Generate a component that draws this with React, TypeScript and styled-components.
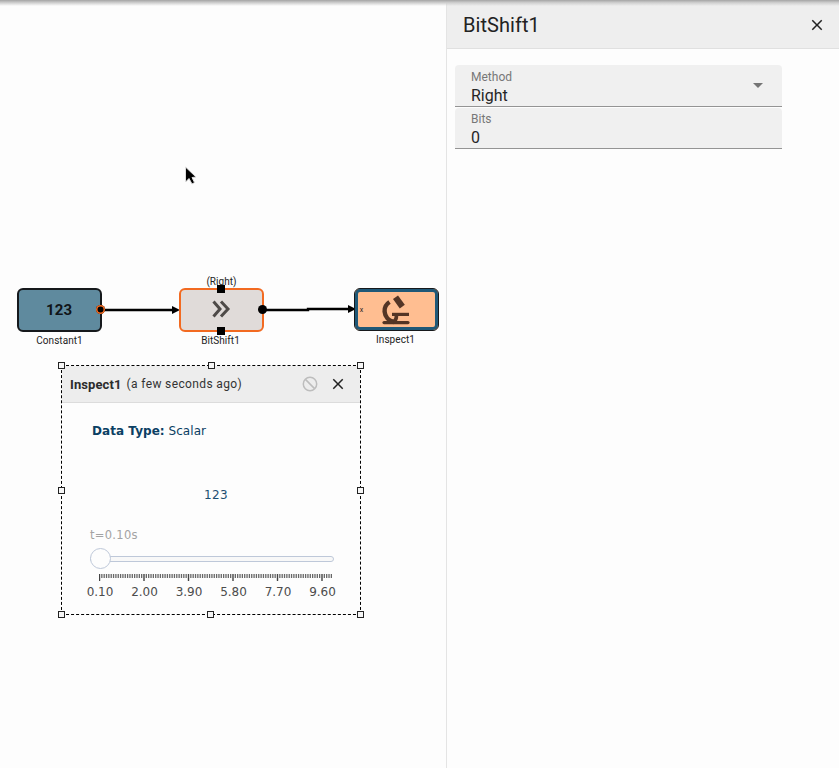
import React from "react";
import styled, { createGlobalStyle } from "styled-components";

const Global = createGlobalStyle`
  html, body { margin: 0; padding: 0; background: #fdfdfd; }
  body { font-family: Roboto, "Liberation Sans", sans-serif; overflow: hidden; }
  #root { width: 839px; height: 768px; }
`;

const Page = styled.div`
  position: relative;
  display: flex;
  width: 839px;
  height: 768px;
  overflow: hidden;
  background: #fdfdfd;
`;

const TopShade = styled.div`
  position: absolute;
  left: 0;
  top: 0;
  right: 0;
  height: 6px;
  z-index: 5;
  background: linear-gradient(to bottom, #a4a4a4 0%, #cfcfcf 45%, #eeeeee00 100%);
`;

const Canvas = styled.main`
  position: relative;
  flex: 0 0 446px;
  height: 768px;
`;

const Wires = styled.svg`
  position: absolute;
  left: 0;
  top: 0;
  width: 446px;
  height: 400px;
`;

const Block = styled.div<{ $x: number; $y: number; $h: number; $bg: string; $border: string; $ring?: string }>`
  position: absolute;
  left: ${(p) => p.$x}px;
  top: ${(p) => p.$y}px;
  width: 85px;
  height: ${(p) => p.$h}px;
  box-sizing: border-box;
  display: flex;
  align-items: center;
  justify-content: center;
  background: ${(p) => p.$bg};
  border: ${(p) => (p.$ring ? "1px" : "2px")} solid ${(p) => p.$border};
  border-radius: 6px;
  box-shadow: ${(p) => (p.$ring ? `inset 0 0 0 3px ${p.$ring}` : "none")};
`;

const BlockValue = styled.span`
  font-size: 15px;
  font-weight: 700;
  letter-spacing: 0.15px;
  color: #101418;
`;

const BlockLabel = styled.span<{ $x: number; $y: number }>`
  position: absolute;
  left: ${(p) => p.$x}px;
  top: ${(p) => p.$y}px;
  width: 85px;
  text-align: center;
  font-size: 10px;
  line-height: 12px;
  letter-spacing: 0.05px;
  color: #222;
`;

const Port = styled.span<{ $x: number; $y: number; $ring?: boolean }>`
  position: absolute;
  left: ${(p) => p.$x}px;
  top: ${(p) => p.$y}px;
  width: 9px;
  height: 9px;
  border-radius: 50%;
  background: #000;
  box-shadow: ${(p) => (p.$ring ? "inset 0 0 0 1.5px #f26a21" : "none")};
`;

const SquarePort = styled.span<{ $x: number; $y: number }>`
  position: absolute;
  left: ${(p) => p.$x}px;
  top: ${(p) => p.$y}px;
  width: 8px;
  height: 8px;
  background: #000;
`;

const SmallX = styled.span`
  position: absolute;
  left: 5px;
  top: 17px;
  font-size: 7px;
  line-height: 8px;
  color: #222;
`;

const Cursor = styled.svg`
  position: absolute;
  left: 183px;
  top: 165px;
  width: 16px;
  height: 22px;
`;

const InspectWindow = styled.section`
  position: absolute;
  left: 61px;
  top: 365px;
  width: 300px;
  height: 250px;
  box-sizing: border-box;
  border: 1px dashed #000;
  display: flex;
  flex-direction: column;
`;

const Handle = styled.span<{ $x: number; $y: number }>`
  position: absolute;
  left: ${(p) => p.$x}px;
  top: ${(p) => p.$y}px;
  width: 7px;
  height: 7px;
  box-sizing: border-box;
  background: #f6f6f6;
  border: 1px solid #222;
  z-index: 2;
`;

const InspectHeader = styled.header`
  flex: 0 0 37px;
  box-sizing: border-box;
  display: flex;
  align-items: center;
  padding: 0 13px 0 8px;
  background: #ededed;
  border-bottom: 1px solid #dcdcdc;
  font-size: 12px;
  color: #333;
  letter-spacing: 0.37px;
`;

const InspectTitle = styled.strong`
  font-size: 13px;
  font-weight: 700;
  margin-right: 5px;
  color: #2c2c2c;
  letter-spacing: 0.1px;
`;

const InspectAgo = styled.span`
  flex: 1;
`;

const HeaderIcons = styled.div`
  display: flex;
  align-items: center;
  gap: 11px;
`;

const InspectBody = styled.div`
  flex: 1;
  display: flex;
  flex-direction: column;
  font-family: "DejaVu Sans", Verdana, sans-serif;
  color: #0b3f63;
`;

const DataType = styled.p`
  margin: 20px 0 0 30px;
  font-size: 12px;
  line-height: 16px;
  letter-spacing: 0.05px;
  strong { font-weight: 700; }
`;

const ScalarValue = styled.p`
  margin: 49px 0 0 0;
  padding-left: 10px;
  text-align: center;
  font-size: 12px;
  line-height: 15px;
  letter-spacing: 0.3px;
  color: #1d4f72;
`;

const TimeLabel = styled.div`
  margin: 25px 0 0 28px;
  font-size: 11.5px;
  line-height: 14px;
  color: #a3a3a3;
  letter-spacing: 0.3px;
`;

const SliderRow = styled.div`
  position: relative;
  margin: 6px 0 0 27.5px;
  width: 244.5px;
  height: 21px;
  display: flex;
  align-items: center;
`;

const SliderTrack = styled.div`
  flex: 1;
  height: 6px;
  box-sizing: border-box;
  border: 1px solid #bec8d9;
  border-radius: 3px;
  background: #f8f8f8;
`;

const SliderThumb = styled.span`
  position: absolute;
  left: 0;
  top: 0;
  width: 21px;
  height: 21px;
  box-sizing: border-box;
  border-radius: 50%;
  border: 1px solid #bec8d9;
  background: #fdfdfd;
`;

const Ticks = styled.svg`
  display: block;
  margin: 5px 0 0 37px;
  width: 236px;
  height: 7px;
`;

const TickLabels = styled.div`
  position: relative;
  margin-top: 4px;
  height: 15px;
`;

const TickLabel = styled.span<{ $x: number }>`
  position: absolute;
  left: ${(p) => p.$x}px;
  top: 0;
  transform: translateX(-50%);
  font-size: 12px;
  line-height: 15px;
  color: #4c4c4c;
`;

const Panel = styled.aside`
  flex: 1;
  height: 768px;
  box-sizing: border-box;
  border-left: 1px solid #e4e4e4;
  display: flex;
  flex-direction: column;
`;

const PanelHeader = styled.header`
  flex: 0 0 49px;
  box-sizing: border-box;
  display: flex;
  align-items: center;
  justify-content: space-between;
  padding: 2px 13px 0 16px;
  background: #eeeeee;
  border-bottom: 1px solid #e0e0e0;
`;

const PanelTitle = styled.h1`
  margin: 0;
  font-size: 20px;
  font-weight: 400;
  letter-spacing: 0.05px;
  color: #222;
`;

const Fields = styled.div`
  display: flex;
  flex-direction: column;
  gap: 1px;
  width: 327px;
  margin: 16px 0 0 8px;
`;

const Field = styled.div<{ $h: number; $top: number }>`
  position: relative;
  height: ${(p) => p.$h}px;
  box-sizing: border-box;
  padding: ${(p) => p.$top}px 16px 0;
  background: #f0f0f0;
  border-radius: 4px 4px 0 0;
  border-bottom: 1px solid #949494;
`;

const FieldLabel = styled.div`
  font-size: 12px;
  line-height: 12px;
  color: #777;
`;

const FieldValue = styled.div`
  margin-top: 3px;
  font-size: 16px;
  line-height: 20px;
  color: #262626;
`;

const Caret = styled.span`
  position: absolute;
  right: 19px;
  top: 18px;
  width: 0;
  height: 0;
  border-left: 5px solid transparent;
  border-right: 5px solid transparent;
  border-top: 5px solid #757575;
`;

const closePath = "M19 6.41 17.59 5 12 10.59 6.41 5 5 6.41 10.59 12 5 17.59 6.41 19 12 13.41 17.59 19 19 17.59 13.41 12z";

const handles: [number, number][] = [
  [58, 362], [208, 362], [357, 362],
  [58, 487], [357, 487],
  [58, 611], [207, 611], [357, 611],
];
const tickValues: [string, number][] = [
  ["0.10", 38], ["2.00", 82.5], ["3.90", 127], ["5.80", 171.5], ["7.70", 216], ["9.60", 260.5],
];

export default function App() {
  const ticks = Array.from({ length: 100 }, (_, i) => i);
  return (
    <Page>
      <Global />
      <TopShade />
      <Canvas>
        <Wires viewBox="0 0 446 400">
          <path d="M104 310 H175" stroke="#000" strokeWidth="2.4" fill="none" />
          <path d="M172 306 L180 310 L172 314 Z" fill="#000" />
          <path d="M266 310 H308 V309 H351" stroke="#000" strokeWidth="2.4" fill="none" />
          <path d="M348 305 L356 309 L348 313 Z" fill="#000" />
        </Wires>

        <Block $x={16.7} $y={288} $h={44} $bg="#5f8a9e" $border="#16191c">
          <BlockValue>123</BlockValue>
        </Block>
        <BlockLabel $x={17} $y={335}>Constant1</BlockLabel>
        <Port $x={96} $y={305} $ring />

        <BlockLabel $x={179} $y={276}>(Right)</BlockLabel>
        <Block $x={178.7} $y={288} $h={44} $bg="#e0dbd9" $border="#f26a21">
          <svg width="20" height="20" viewBox="0 0 20 20" fill="none" stroke="#4e4a48" strokeWidth="3">
            <polyline points="2.5,1.5 9,9 2.5,16.5" />
            <polyline points="10,1.5 17,9 10,16.5" />
          </svg>
        </Block>
        <BlockLabel $x={178} $y={335}>BitShift1</BlockLabel>
        <SquarePort $x={217} $y={285} />
        <SquarePort $x={217} $y={327} />
        <Port $x={258} $y={305} />

        <Block $x={353.7} $y={288} $h={43} $bg="#ffbe91" $border="#16191c" $ring="#1f5877">
          <SmallX>x</SmallX>
          <svg width="30" height="30" viewBox="0 0 30 30" fill="none" stroke="#543525">
            <path d="M3 27.6 H27" strokeWidth="3.2" strokeLinecap="round" />
            <path d="M8.5 7 C4.5 9.5 3.4 13 3.6 16.5 C4 22 8 26 13 27" strokeWidth="4.4" />
            <path d="M11 19.4 H28" strokeWidth="3.2" />
            <path d="M15.5 20 C15.5 23 14.8 25.5 13 27" strokeWidth="3.6" />
            <path d="M14.5 2.2 L21.3 11.6" strokeWidth="6.2" />
          </svg>
        </Block>
        <BlockLabel $x={353} $y={334}>Inspect1</BlockLabel>

        <Cursor viewBox="0 0 16 22">
          <path d="M2.5 2 L2.5 17 L6 13.5 L9 19 L11.5 17.5 L9 12.5 L13 12 Z" fill="#000" stroke="#ddd" strokeWidth="1" />
        </Cursor>

        <InspectWindow>
          <InspectHeader>
            <InspectTitle>Inspect1</InspectTitle>
            <InspectAgo>(a few seconds ago)</InspectAgo>
            <HeaderIcons>
              <svg width="16" height="16" viewBox="0 0 16 16" fill="none" stroke="#bdbdbd" strokeWidth="1.5">
                <circle cx="8" cy="8" r="6.7" />
                <path d="M3.4 3.4 L12.6 12.6" />
              </svg>
              <svg width="18" height="18" viewBox="0 0 24 24" fill="#222">
                <path d={closePath} />
              </svg>
            </HeaderIcons>
          </InspectHeader>
          <InspectBody>
            <DataType><strong>Data Type:</strong> Scalar</DataType>
            <ScalarValue>123</ScalarValue>
            <TimeLabel>t=0.10s</TimeLabel>
            <SliderRow>
              <SliderTrack />
              <SliderThumb />
            </SliderRow>
            <Ticks viewBox="0 0 236 7">
              {ticks.map((i) => {
                const major = i % 19 === 0;
                const x = 0.5 + i * (44.5 / 19);
                return (
                  <line key={i} x1={x} x2={x} y1="0" y2={major ? 7 : 4} stroke={major ? "#444" : "#666"} strokeWidth={major ? 1.4 : 1.3} />
                );
              })}
            </Ticks>
            <TickLabels>
              {tickValues.map(([t, x]) => (
                <TickLabel key={t} $x={x}>{t}</TickLabel>
              ))}
            </TickLabels>
          </InspectBody>
        </InspectWindow>
        {handles.map(([x, y]) => (
          <Handle key={`${x}-${y}`} $x={x} $y={y} />
        ))}
      </Canvas>

      <Panel>
        <PanelHeader>
          <PanelTitle>BitShift1</PanelTitle>
          <svg width="18" height="18" viewBox="0 0 24 24" fill="#222">
            <path d={closePath} />
          </svg>
        </PanelHeader>
        <Fields>
          <Field $h={42} $top={6}>
            <FieldLabel>Method</FieldLabel>
            <FieldValue>Right</FieldValue>
            <Caret />
          </Field>
          <Field $h={41} $top={5}>
            <FieldLabel>Bits</FieldLabel>
            <FieldValue>0</FieldValue>
          </Field>
        </Fields>
      </Panel>
    </Page>
  );
}
